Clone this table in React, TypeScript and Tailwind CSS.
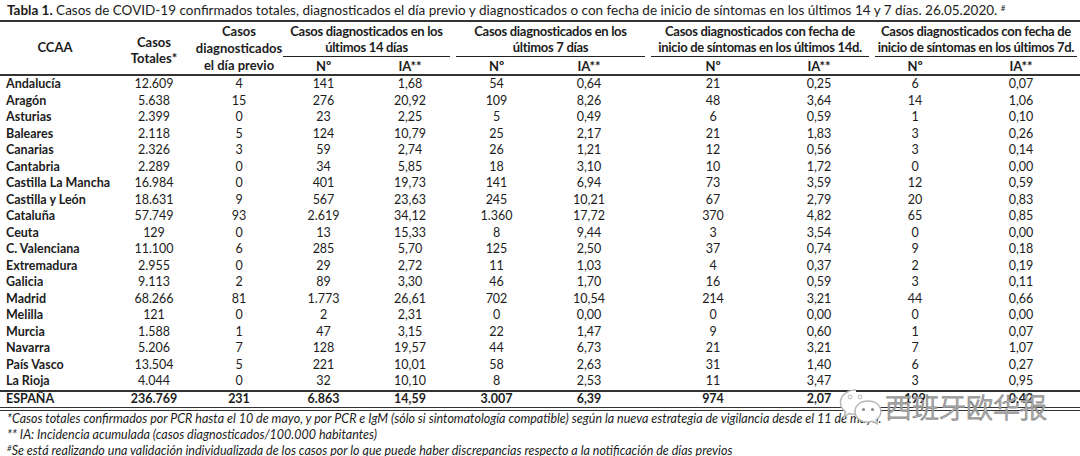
import React from 'react'

type Row = [string, string, string, string, string, string, string, string, string, string, string]

const rows: Row[] = [
  ['Andalucía', '12.609', '4', '141', '1,68', '54', '0,64', '21', '0,25', '6', '0,07'],
  ['Aragón', '5.638', '15', '276', '20,92', '109', '8,26', '48', '3,64', '14', '1,06'],
  ['Asturias', '2.399', '0', '23', '2,25', '5', '0,49', '6', '0,59', '1', '0,10'],
  ['Baleares', '2.118', '5', '124', '10,79', '25', '2,17', '21', '1,83', '3', '0,26'],
  ['Canarias', '2.326', '3', '59', '2,74', '26', '1,21', '12', '0,56', '3', '0,14'],
  ['Cantabria', '2.289', '0', '34', '5,85', '18', '3,10', '10', '1,72', '0', '0,00'],
  ['Castilla La Mancha', '16.984', '0', '401', '19,73', '141', '6,94', '73', '3,59', '12', '0,59'],
  ['Castilla y León', '18.631', '9', '567', '23,63', '245', '10,21', '67', '2,79', '20', '0,83'],
  ['Cataluña', '57.749', '93', '2.619', '34,12', '1.360', '17,72', '370', '4,82', '65', '0,85'],
  ['Ceuta', '129', '0', '13', '15,33', '8', '9,44', '3', '3,54', '0', '0,00'],
  ['C. Valenciana', '11.100', '6', '285', '5,70', '125', '2,50', '37', '0,74', '9', '0,18'],
  ['Extremadura', '2.955', '0', '29', '2,72', '11', '1,03', '4', '0,37', '2', '0,19'],
  ['Galicia', '9.113', '2', '89', '3,30', '46', '1,70', '16', '0,59', '3', '0,11'],
  ['Madrid', '68.266', '81', '1.773', '26,61', '702', '10,54', '214', '3,21', '44', '0,66'],
  ['Melilla', '121', '0', '2', '2,31', '0', '0,00', '0', '0,00', '0', '0,00'],
  ['Murcia', '1.588', '1', '47', '3,15', '22', '1,47', '9', '0,60', '1', '0,07'],
  ['Navarra', '5.206', '7', '128', '19,57', '44', '6,73', '21', '3,21', '7', '1,07'],
  ['País Vasco', '13.504', '5', '221', '10,01', '58', '2,63', '31', '1,40', '6', '0,27'],
  ['La Rioja', '4.044', '0', '32', '10,10', '8', '2,53', '11', '3,47', '3', '0,95'],
]

const total: Row = ['ESPAÑA', '236.769', '231', '6.863', '14,59', '3.007', '6,39', '974', '2,07', '199', '0,42']

const grid = 'grid grid-cols-[110px_88px_82px_87px_86px_87px_108px_118px_106px_96px_112px]'

// small nudges so the centred values sit where the source PDF has them
const shift = ['', '', '', '', '', 'pr-[10px]', 'pl-[12px]', '', 'pr-[10px]', 'pr-[6px]']

const subCols = [
  'col-start-4',
  'col-start-5',
  'col-start-6',
  'col-start-7',
  'col-start-8',
  'col-start-9',
  'col-start-10',
  'col-start-11',
]

function DataRow({ r, bold, h = 'h-[16.5px]' }: { r: Row; bold?: boolean; h?: string }) {
  return (
    <div className={`${grid} ${h} items-center leading-none ${bold ? 'font-bold' : ''}`}>
      <div className="whitespace-nowrap pl-[6px] font-bold">{r[0]}</div>
      {r.slice(1).map((v, i) => (
        <div key={i} className={`text-center ${shift[i]}`}>
          {v}
        </div>
      ))}
    </div>
  )
}

function GroupHead({ a, b, span }: { a: string; b: string; span: string }) {
  return (
    <div className={`${span} row-start-1 flex flex-col items-center justify-end px-[3px]`}>
      <div className="flex w-full flex-col items-center border-b border-[#222] pb-[1px] leading-[16px] tracking-[-0.3px]">
        <div className="whitespace-nowrap">{a}</div>
        <div className="whitespace-nowrap">{b}</div>
      </div>
    </div>
  )
}

function WeChatMark() {
  return (
    <div className="absolute left-[838px] top-[387px] flex items-center gap-[1px] whitespace-nowrap">
      <svg width="46" height="38" viewBox="0 0 46 38" fill="none">
        <path
          d="M18 3C9 3 2.5 8.6 2.5 15.5c0 3.8 2 7 5 9.3l-1.3 4.4 5.2-2.7c1.9.6 4 .9 6.1.9"
          stroke="#b8b8b8"
          strokeWidth="1.5"
          fill="white"
        />
        <circle cx="12" cy="10" r="1.9" stroke="#b8b8b8" strokeWidth="1" fill="white" />
        <circle cx="22" cy="10" r="1.9" stroke="#b8b8b8" strokeWidth="1" fill="white" />
        <path
          d="M30 14c-7.5 0-13 4.6-13 10.5S22.5 35 30 35c1.6 0 3.1-.3 4.6-.7l4.6 2.4-1.2-3.9c2.9-2 4.9-4.8 4.9-8.3C42.9 18.6 37.4 14 30 14z"
          stroke="#b8b8b8"
          strokeWidth="1.5"
          fill="white"
        />
        <circle cx="25.5" cy="22.5" r="1.6" fill="#8f8f8f" />
        <circle cx="34.5" cy="22.5" r="1.6" fill="#8f8f8f" />
      </svg>
      <span className="font-['Noto_Sans_CJK_SC',sans-serif] text-[27px] font-light leading-none text-white [-webkit-text-stroke:1px_#8f8f8f]">
        西班牙欧华报
      </span>
    </div>
  )
}

export default function App() {
  return (
    <div className="relative h-[456px] w-[1080px] overflow-hidden bg-white font-['Lato','Liberation_Sans',sans-serif] text-[12.5px] text-[#1c1c1c]">
      <div className="h-[20px] whitespace-nowrap pl-[7px] pt-[2px] text-[13.5px] leading-[17px]">
        <span className="font-bold">Tabla 1.</span> Casos de COVID-19 confirmados totales, diagnosticados el día previo y
        diagnosticados o con fecha de inicio de síntomas en los últimos 14 y 7 días. 26.05.2020.{' '}
        <sup className="text-[8px]">#</sup>
      </div>

      <div className="border-t-2 border-[#333]" />

      {/* header */}
      <div className={`${grid} grid-rows-[35px_17px] text-[13px] font-bold`}>
        <div className="col-start-1 row-span-2 row-start-1 flex items-center justify-center">CCAA</div>
        <div className="col-start-2 row-span-2 row-start-1 flex flex-col items-center justify-center pt-[4px] leading-[16px]">
          <div>Casos</div>
          <div>Totales*</div>
        </div>
        <div className="col-start-3 row-span-2 row-start-1 flex flex-col items-center justify-center pt-[1px] leading-[17px]">
          <div>Casos</div>
          <div>diagnosticados</div>
          <div>el día previo</div>
        </div>
        <GroupHead span="col-span-2 col-start-4" a="Casos diagnosticados en los" b="últimos 14 días" />
        <GroupHead span="col-span-2 col-start-6" a="Casos diagnosticados en los" b="últimos 7 días" />
        <GroupHead span="col-span-2 col-start-8" a="Casos diagnosticados con fecha de" b="inicio de síntomas en los últimos 14d." />
        <GroupHead span="col-span-2 col-start-10" a="Casos diagnosticados con fecha de" b="inicio de síntomas en los últimos 7d." />
        {['Nº', 'IA**', 'Nº', 'IA**', 'Nº', 'IA**', 'Nº', 'IA**'].map((h, i) => (
          <div key={i} className={`${subCols[i]} ${shift[i + 2]} row-start-2 flex items-center justify-center pt-[2px]`}>
            {h}
          </div>
        ))}
      </div>

      <div className="border-t-2 border-[#333]" />

      {rows.map((r) => (
        <DataRow key={r[0]} r={r} />
      ))}

      <div className="border-t-2 border-[#333]" />
      <DataRow r={total} bold h="h-[15.5px]" />
      <div className="h-[4px] border-y border-[#333]" />

      <div className="pl-[7px] text-[12.5px] italic leading-[16px]">
        <div className="whitespace-nowrap">
          *Casos totales confirmados por PCR hasta el 10 de mayo, y por PCR e IgM (sólo si sintomatología compatible) según
          la nueva estrategia de vigilancia desde el 11 de mayo.
        </div>
        <div>** IA: Incidencia acumulada (casos diagnosticados/100.000 habitantes)</div>
        <div className="whitespace-nowrap">
          <sup className="text-[8px]">#</sup>Se está realizando una validación individualizada de los casos por lo que puede
          haber discrepancias respecto a la notificación de días previos
        </div>
      </div>

      <WeChatMark />
    </div>
  )
}
